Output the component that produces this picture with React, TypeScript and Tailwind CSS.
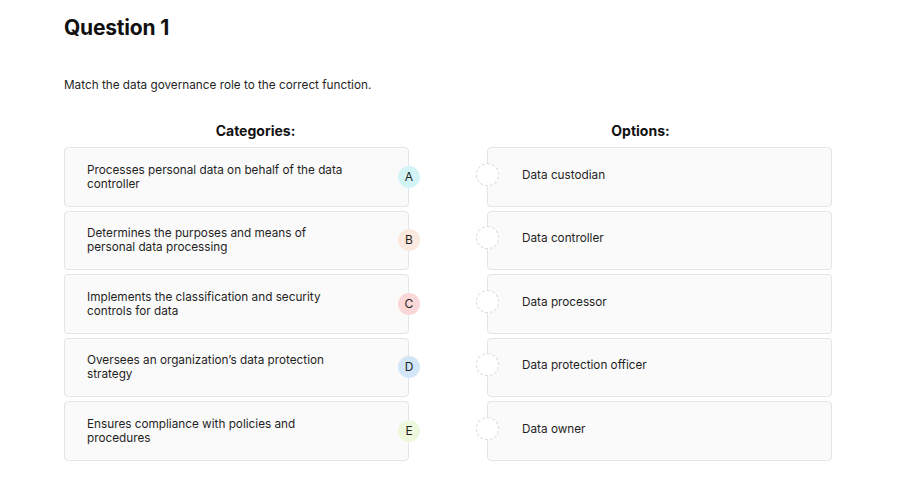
const CATEGORIES = [
  { text: "Processes personal data on behalf of the data controller", letter: "A", color: "bg-[#d2f4f6]" },
  { text: "Determines the purposes and means of personal data processing", letter: "B", color: "bg-[#fbe8de]" },
  { text: "Implements the classification and security controls for data", letter: "C", color: "bg-[#fbd7d7]" },
  { text: "Oversees an organization\u2019s data protection strategy", letter: "D", color: "bg-[#d3e6f8]" },
  { text: "Ensures compliance with policies and procedures", letter: "E", color: "bg-[#eef8dc]" },
]

const OPTIONS = ["Data custodian", "Data controller", "Data processor", "Data protection officer", "Data owner"]

export default function App() {
  return (
    <div className="min-h-screen bg-white text-[#1f1f1f] font-['Inter',sans-serif] pl-[64px] pr-[83px] pt-[14px]">
      <h1 className="text-[21px] font-bold leading-[28px] tracking-[-0.2px] text-[#111]">Question 1</h1>
      <p className="mt-[35px] text-[11.75px] leading-[16px]">Match the data governance role to the correct function.</p>

      <div className="mt-[28px] grid grid-cols-2 gap-[2px]">
        {/* Categories */}
        <div className="flex flex-col">
          <h2 className="text-center text-[14px] font-bold leading-[20px] mb-[6px] text-[#111]">Categories:</h2>
          <div className="flex flex-col gap-[4px] w-[345px]">
            {CATEGORIES.map((c) => (
              <div key={c.letter} className="relative h-[59.5px] rounded-[4px] border border-[#e3e5ea] bg-[#fafafa] flex items-center pl-[22px]">
                <p className="max-w-[262px] text-[11.75px] leading-[14px]">{c.text}</p>
                <div className={`absolute right-[-12px] top-1/2 -translate-y-1/2 w-[22px] h-[22px] rounded-full ${c.color} flex items-center justify-center text-[12px]`}>
                  {c.letter}
                </div>
              </div>
            ))}
          </div>
        </div>

        {/* Options */}
        <div className="flex flex-col items-end">
          <h2 className="self-stretch text-center text-[14px] font-bold leading-[20px] mb-[6px] text-[#111]">Options:</h2>
          <div className="flex flex-col gap-[4px] w-[345px]">
            {OPTIONS.map((o) => (
              <div key={o} className="relative h-[59.5px] rounded-[4px] border border-[#e3e5ea] bg-[#fafafa] flex items-center pl-[34px] pb-[4px]">
                <div className="absolute left-[-12px] top-1/2 -translate-y-[60%] w-[23px] h-[23px] rounded-full bg-white border border-dashed border-[#d8dade]" />
                <p className="text-[11.75px] leading-[14px]">{o}</p>
              </div>
            ))}
          </div>
        </div>
      </div>
    </div>
  )
}
